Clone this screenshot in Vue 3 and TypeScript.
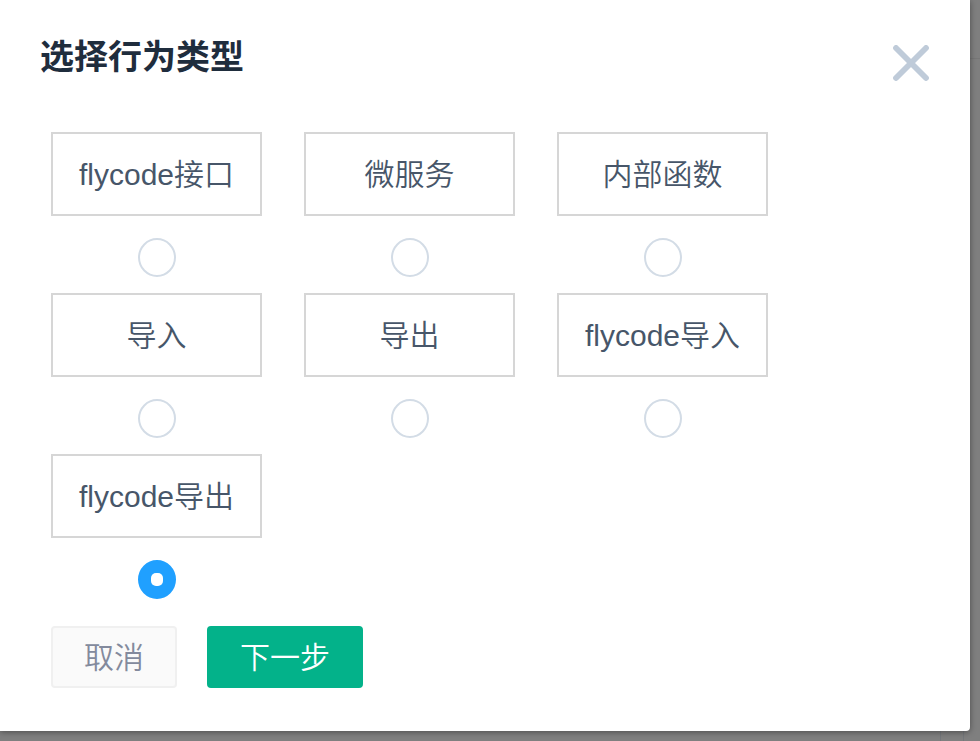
<script setup lang="ts">
import { ref } from 'vue'

interface ActionType {
  id: string
  label: string
}

const actionTypes: ActionType[] = [
  { id: 'flycode-api', label: 'flycode接口' },
  { id: 'micro-service', label: '微服务' },
  { id: 'internal-function', label: '内部函数' },
  { id: 'import', label: '导入' },
  { id: 'export', label: '导出' },
  { id: 'flycode-import', label: 'flycode导入' },
  { id: 'flycode-export', label: 'flycode导出' },
]

const selected = ref<string>('flycode-export')
</script>

<template>
  <div class="stage">
    <div class="backdrop" aria-hidden="true">
      <div class="backdrop-head"></div>
      <div class="backdrop-body">
        <div class="backdrop-column"></div>
      </div>
    </div>

    <form class="dialog" role="dialog" aria-labelledby="dialog-title" @submit.prevent>
      <header class="dialog-header">
        <h1 id="dialog-title" class="title">选择行为类型</h1>
        <button class="close" type="button" aria-label="关闭">
          <svg viewBox="0 0 36 36" width="36" height="36" aria-hidden="true">
            <path d="M3 3 33 33M33 3 3 33" fill="none" stroke="#bfcbd9" stroke-width="5.8" stroke-linecap="round" />
          </svg>
        </button>
      </header>

      <div class="options" role="radiogroup" aria-labelledby="dialog-title">
        <div v-for="item in actionTypes" :key="item.id" class="option">
          <label class="card" :for="item.id">{{ item.label }}</label>
          <input :id="item.id" v-model="selected" class="radio" type="radio" name="action-type" :value="item.id" />
        </div>
      </div>

      <footer class="actions">
        <button class="button cancel" type="button">取消</button>
        <button class="button next" type="submit">下一步</button>
      </footer>
    </form>
  </div>
</template>

<style>
body {
  margin: 0;
  background: #7f7f7f;
}
</style>

<style scoped>
.stage {
  display: grid;
  min-height: 100vh;
  overflow: hidden;
  font-family: "Liberation Sans", "Noto Sans CJK SC", sans-serif;
  font-weight: 350;
}

.backdrop,
.dialog {
  grid-area: 1 / 1;
  box-sizing: border-box;
}

.backdrop {
  display: flex;
  flex-direction: column;
  background: #7f7f7f;
}

.backdrop-head {
  height: 58px;
  border-bottom: 1px solid #777777;
}

.backdrop-body {
  display: flex;
  flex: 1;
  justify-content: flex-end;
  padding-right: 16px;
}

.backdrop-column {
  width: 22px;
  border: solid #74777b;
  border-width: 0 1px;
}

.dialog {
  position: relative;
  align-self: start;
  margin: 0 10px 10px 0;
  padding: 32px 41px 43px 40px;
  background: #ffffff;
  border-radius: 0 0 4px 0;
  box-shadow: 0 1px 6px rgba(0, 0, 0, 0.4);
}

.dialog-header {
  display: flex;
  justify-content: space-between;
  align-items: flex-start;
  height: 100px;
}

.title {
  margin: 0;
  font-size: 34px;
  font-weight: 700;
  line-height: 50px;
  color: #1f2d3d;
}

.close {
  display: flex;
  margin-top: 13px;
  padding: 0;
  border: 0;
  background: none;
  cursor: pointer;
}

.options {
  display: grid;
  grid-template-columns: repeat(auto-fill, 211px);
  gap: 16px 42px;
  padding: 0 11px;
}

.option {
  display: flex;
  flex-direction: column;
  align-items: center;
  gap: 22px;
}

.card {
  box-sizing: border-box;
  width: 100%;
  padding: 21px 0 19px;
  border: 2px solid #d6d6d6;
  font-size: 30px;
  line-height: 40px;
  text-align: center;
  color: #475669;
  cursor: pointer;
}

.radio {
  appearance: none;
  display: grid;
  place-items: center;
  box-sizing: border-box;
  width: 38px;
  height: 39px;
  margin: 0;
  border: 2px solid #d3dce6;
  border-radius: 50%;
  background: #ffffff;
  cursor: pointer;
}

.radio:checked {
  border-color: #20a0ff;
  background: #20a0ff;
}

.radio:checked::before {
  content: "";
  width: 12px;
  height: 13px;
  border-radius: 5px;
  background: #ffffff;
}

.actions {
  display: flex;
  gap: 30px;
  padding: 27px 11px 0;
}

.button {
  box-sizing: border-box;
  height: 62px;
  padding: 2px 31px 0;
  border: 2px solid #03b28a;
  border-radius: 4px;
  font-family: inherit;
  font-size: 30px;
  font-weight: inherit;
  line-height: 40px;
  cursor: pointer;
}

.cancel {
  border-color: #f0f0f0;
  background: #fafafa;
  color: #838a9d;
}

.next {
  background: #03b28a;
  color: #ffffff;
}
</style>
